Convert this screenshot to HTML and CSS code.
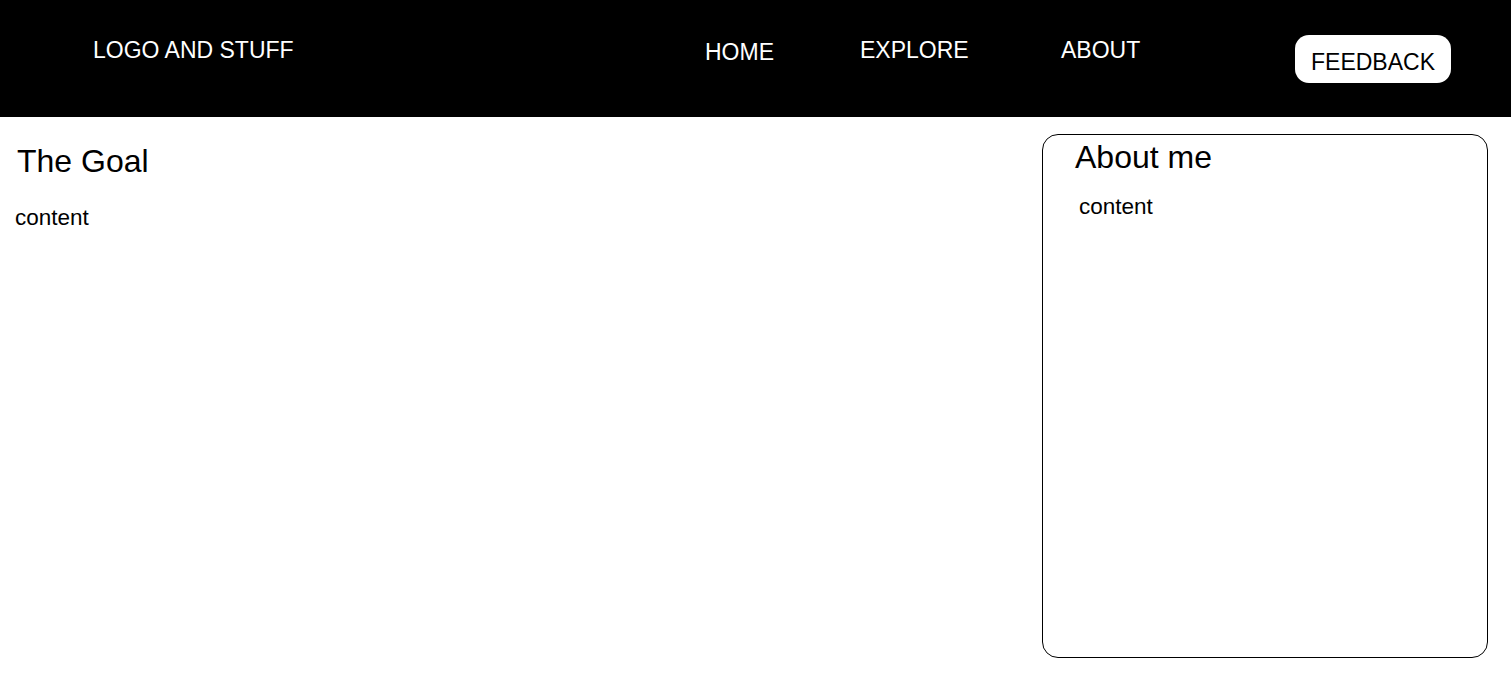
FILE: index.html
```html
<!DOCTYPE html>
<html lang="en">
<head>
<meta charset="utf-8">
<title>The Goal</title>
<link rel="stylesheet" href="styles.css">
</head>
<body>
<header class="topbar">
  <div class="logo">LOGO AND STUFF</div>
  <nav class="nav">
    <a class="nav-link nav-home" href="#">HOME</a>
    <a class="nav-link nav-explore" href="#">EXPLORE</a>
    <a class="nav-link nav-about" href="#">ABOUT</a>
  </nav>
  <button class="feedback">FEEDBACK</button>
</header>
<main class="layout">
  <section class="goal">
    <h1 class="goal-title">The Goal</h1>
    <p class="goal-text">content</p>
  </section>
  <aside class="about">
    <h2 class="about-title">About me</h2>
    <p class="about-text">content</p>
  </aside>
</main>
</body>
</html>
```
FILE: styles.css
```css
* { box-sizing: border-box; }
html, body {
  margin: 0;
  padding: 0;
  background: #fff;
  font-family: "Liberation Sans", Arial, sans-serif;
  color: #000;
}
.topbar {
  height: 117px;
  background: #000;
  display: flex;
  align-items: flex-start;
  padding: 37px 0 0 93px;
}
.logo {
  color: #fff;
  font-size: 23px;
  line-height: 26px;
  width: 612px;
}
.nav {
  display: flex;
  align-items: flex-start;
}
.nav-link {
  color: #fff;
  text-decoration: none;
  font-size: 23px;
  line-height: 26px;
}
.nav-home { margin-top: 2px; width: 155px; }
.nav-explore { width: 201px; }
.nav-about { width: 234px; }
.feedback {
  margin-top: -2px;
  width: 156px;
  height: 48px;
  background: #fff;
  border: none;
  border-radius: 14px;
  font-family: "Liberation Sans", Arial, sans-serif;
  font-size: 23px;
  line-height: 26px;
  color: #000;
  padding: 5px 0 0 0;
  text-align: center;
}
.layout {
  display: flex;
  align-items: flex-start;
  padding: 17px 23px 0 0;
}
.goal {
  flex: 1;
  padding: 9px 0 0 15px;
}
.goal-title {
  margin: 0 0 25px 2px;
  font-size: 32px;
  line-height: 37px;
  font-weight: normal;
}
.goal-text {
  margin: 0;
  font-size: 22.5px;
  line-height: 26px;
}
.about {
  width: 446px;
  height: 524px;
  border: 1px solid #000;
  border-radius: 16px;
  padding: 4px 0 0 32px;
}
.about-title {
  margin: 0 0 18px 0;
  font-size: 32px;
  line-height: 37px;
  font-weight: normal;
}
.about-text {
  margin: 0 0 0 4px;
  font-size: 22.5px;
  line-height: 26px;
}
```
